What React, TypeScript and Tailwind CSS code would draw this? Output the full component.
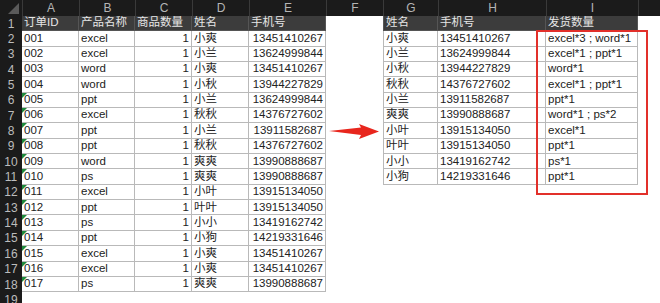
import React from "react";

const leftRows = [
  ["001", "excel", "1", "小爽", "13451410267"],
  ["002", "excel", "1", "小兰", "13624999844"],
  ["003", "word", "1", "小爽", "13451410267"],
  ["004", "word", "1", "小秋", "13944227829"],
  ["005", "ppt", "1", "小兰", "13624999844"],
  ["006", "excel", "1", "秋秋", "14376727602"],
  ["007", "ppt", "1", "小兰", "13911582687"],
  ["008", "ppt", "1", "秋秋", "14376727602"],
  ["009", "word", "1", "爽爽", "13990888687"],
  ["010", "ps", "1", "爽爽", "13990888687"],
  ["011", "excel", "1", "小叶", "13915134050"],
  ["012", "ppt", "1", "叶叶", "13915134050"],
  ["013", "ps", "1", "小小", "13419162742"],
  ["014", "ppt", "1", "小狗", "14219331646"],
  ["015", "excel", "1", "小爽", "13451410267"],
  ["016", "excel", "1", "小爽", "13451410267"],
  ["017", "ps", "1", "爽爽", "13990888687"],
];

const rightRows = [
  ["小爽", "13451410267", "excel*3 ; word*1"],
  ["小兰", "13624999844", "excel*1 ; ppt*1"],
  ["小秋", "13944227829", "word*1"],
  ["秋秋", "14376727602", "excel*1 ; ppt*1"],
  ["小兰", "13911582687", "ppt*1"],
  ["爽爽", "13990888687", "word*1 ; ps*2"],
  ["小叶", "13915134050", "excel*1"],
  ["叶叶", "13915134050", "ppt*1"],
  ["小小", "13419162742", "ps*1"],
  ["小狗", "14219331646", "ppt*1"],
];

const letters = ["A", "B", "C", "D", "E", "F", "G", "H", "I", ""];

const HeadCell = ({ text, first }: { text: string; first?: boolean }) => (
  <div
    className={
      "flex items-center border-r border-b border-[#555] bg-[#3c3c3c] pl-[2px] text-[#e6e6e6]" +
      (first ? " border-l" : "")
    }
  >
    {text}
  </div>
);

const DataCell = ({
  text,
  right,
  first,
  mark,
}: {
  text: string;
  right?: boolean;
  first?: boolean;
  mark?: boolean;
}) => (
  <div
    className={
      "relative flex items-center border-r border-b border-[#b9b9b9] bg-white px-[2px] text-[#222]" +
      (right ? " justify-end" : "") +
      (first ? " border-l" : "")
    }
  >
    {mark && (
      <span className="absolute left-0 top-0 h-0 w-0 border-t-[5px] border-r-[5px] border-t-[#1f8a3c] border-r-transparent" />
    )}
    {text}
  </div>
);

const Empty = () => <div className="bg-white" />;

export default function App() {
  const rows: React.ReactNode[] = [];

  for (let r = 1; r <= 19; r++) {
    const cells: React.ReactNode[] = [];
    cells.push(
      <div
        key="n"
        className="flex items-center justify-center bg-[#1b1b1b] text-[12px] text-[#bdbdbd]"
      >
        {r}
      </div>
    );
    // left table A-E
    if (r === 1) {
      ["订单ID", "产品名称", "商品数量", "姓名", "手机号"].forEach((t, i) =>
        cells.push(<HeadCell key={"l" + i} text={t} />)
      );
    } else if (r <= 18) {
      leftRows[r - 2].forEach((t, i) =>
        cells.push(
          <DataCell
            key={"l" + i}
            text={t}
            right={i === 2 || i === 4}
            mark={i === 0 && r >= 6}
          />
        )
      );
    } else {
      for (let i = 0; i < 5; i++) cells.push(<Empty key={"l" + i} />);
    }
    // F
    cells.push(<Empty key="f" />);
    // right table G-I
    if (r === 1) {
      ["姓名", "手机号", "发货数量"].forEach((t, i) =>
        cells.push(<HeadCell key={"r" + i} text={t} first={i === 0} />)
      );
    } else if (r <= 11) {
      rightRows[r - 2].forEach((t, i) =>
        cells.push(<DataCell key={"r" + i} text={t} first={i === 0} />)
      );
    } else {
      for (let i = 0; i < 3; i++) cells.push(<Empty key={"r" + i} />);
    }
    cells.push(<Empty key="j" />);
    rows.push(<React.Fragment key={r}>{cells}</React.Fragment>);
  }

  return (
    <div
      className="relative h-[303px] w-[660px] overflow-hidden bg-white text-[11.5px] leading-none"
      style={{ fontFamily: '"Liberation Sans", "Noto Sans CJK SC", sans-serif' }}
    >
      <div className="grid grid-cols-[22px_57px_56px_57px_57px_77px_57px_55px_108px_92px_1fr] grid-rows-[16px_repeat(19,15.35px)]">
        <div className="relative bg-[#1b1b1b]">
          <span className="absolute bottom-[2px] right-[3px] h-0 w-0 border-b-[11px] border-l-[11px] border-b-[#5a5a5a] border-l-transparent" />
        </div>
        {letters.map((l, i) => (
          <div
            key={i}
            className="flex items-center justify-center border-l border-[#3a3a3a] bg-[#1b1b1b] text-[12px] text-[#b5b5b5]"
          >
            {l}
          </div>
        ))}
        {rows}
      </div>

      <div className="pointer-events-none absolute left-[536px] top-[30px] h-[165px] w-[112px] border-2 border-[#e2302a]" />

      <svg
        className="absolute left-[328px] top-[122px]"
        width="54"
        height="19"
        viewBox="0 0 54 19"
      >
        <polygon
          points="1,9 33,5.5 31,2 51,9.5 31,17 33,13"
          fill="#e8261d"
        />
      </svg>
    </div>
  );
}
